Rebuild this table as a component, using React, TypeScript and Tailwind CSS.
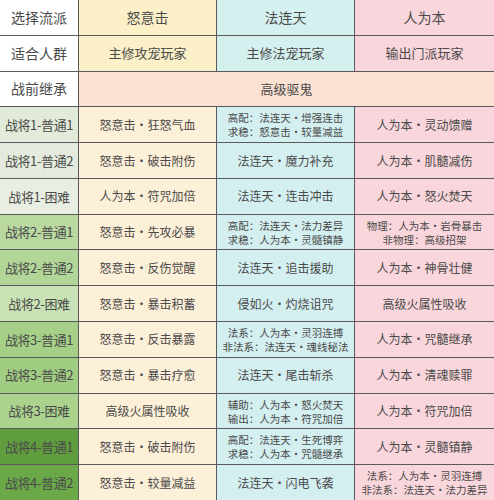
import React from "react";

type Cell = string | [string, string];

const rows: { label: string; bg: string; cells: Cell[] }[] = [
  { label: "战将1-普通1", bg: "bg-[#e2ebd9]", cells: ["怒意击・狂怒气血", ["高配：法连天・增强连击", "求稳：怒意击・较量减益"], "人为本・灵动馈赠"] },
  { label: "战将1-普通2", bg: "bg-[#e4eadd]", cells: ["怒意击・破击附伤", "法连天・魔力补充", "人为本・肌髓减伤"] },
  { label: "战将1-困难", bg: "bg-[#e8eee2]", cells: ["人为本・符咒加倍", "法连天・连击冲击", "人为本・怒火焚天"] },
  { label: "战将2-普通1", bg: "bg-[#b9d9a1]", cells: ["怒意击・先攻必暴", ["高配：法连天・法力差异", "求稳：人为本・灵髓镇静"], ["物理：人为本・岩骨暴击", "非物理：高级招架"]] },
  { label: "战将2-普通2", bg: "bg-[#b2d598]", cells: ["怒意击・反伤觉醒", "法连天・追击援助", "人为本・神骨壮健"] },
  { label: "战将2-困难", bg: "bg-[#c9e2b5]", cells: ["怒意击・暴击积蓄", "侵如火・灼烧诅咒", "高级火属性吸收"] },
  { label: "战将3-普通1", bg: "bg-[#a6cf88]", cells: ["怒意击・反击暴露", ["法系：人为本・灵羽连搏", "非法系：法连天・魂线秘法"], "人为本・咒髓继承"] },
  { label: "战将3-普通2", bg: "bg-[#a1cd82]", cells: ["怒意击・暴击疗愈", "法连天・尾击斩杀", "人为本・清魂赎罪"] },
  { label: "战将3-困难", bg: "bg-[#abd38e]", cells: ["高级火属性吸收", ["辅助：人为本・怒火焚天", "输出：人为本・符咒加倍"], "人为本・符咒加倍"] },
  { label: "战将4-普通1", bg: "bg-[#5f9d3e]", cells: ["怒意击・破击附伤", ["高配：法连天・生死博弈", "求稳：人为本・咒髓继承"], "人为本・灵髓镇静"] },
  { label: "战将4-普通2", bg: "bg-[#6aa848]", cells: ["怒意击・较量减益", "法连天・闪电飞袭", ["法系：人为本・灵羽连搏", "非法系：法连天・法力差异"]] },
];

const colBg = ["bg-[#fdf0d8]", "bg-[#d4eff0]", "bg-[#f9d6db]"];

function Content({ c }: { c: Cell }) {
  if (typeof c === "string") {
    return <span className="text-[12px] leading-none">{c}</span>;
  }
  return (
    <div className="flex flex-col items-center gap-[1px] text-[10.5px] leading-[13px]">
      <span>{c[0]}</span>
      <span>{c[1]}</span>
    </div>
  );
}

export default function App() {
  const font = { fontFamily: '"Noto Sans CJK SC", "Noto Sans", sans-serif' };
  return (
    <div
      className="w-[494px] h-[500px] grid grid-cols-[78px_137px_137px_1fr] grid-rows-[repeat(14,1fr)] gap-px bg-[#5a5a5a] text-[#4a4a4a] overflow-hidden"
      style={font}
    >
      <div className="bg-white flex items-center justify-center text-[14px]">选择流派</div>
      <div className="bg-[#fbf0c8] flex items-center justify-center text-[14px]">怒意击</div>
      <div className="bg-[#d4f0ef] flex items-center justify-center text-[14px]">法连天</div>
      <div className="bg-[#f9d6db] flex items-center justify-center text-[14px]">人为本</div>

      <div className="bg-white flex items-center justify-center text-[14px]">适合人群</div>
      <div className="bg-[#fbf0c8] flex items-center justify-center text-[13px]">主修攻宠玩家</div>
      <div className="bg-[#d4f0ef] flex items-center justify-center text-[13px]">主修法宠玩家</div>
      <div className="bg-[#f9d6db] flex items-center justify-center text-[13px]">输出门派玩家</div>

      <div className="bg-white flex items-center justify-center text-[14px]">战前继承</div>
      <div className="col-span-3 bg-[#fbe1d2] flex items-center justify-center text-[13px]">高级驱鬼</div>

      {rows.map((r) => (
        <React.Fragment key={r.label}>
          <div className={`${r.bg} flex items-center justify-center text-[13px] tracking-[-0.4px] whitespace-nowrap`}>{r.label}</div>
          {r.cells.map((c, i) => (
            <div key={i} className={`${colBg[i]} flex items-center justify-center whitespace-nowrap`}>
              <Content c={c} />
            </div>
          ))}
        </React.Fragment>
      ))}
    </div>
  );
}
